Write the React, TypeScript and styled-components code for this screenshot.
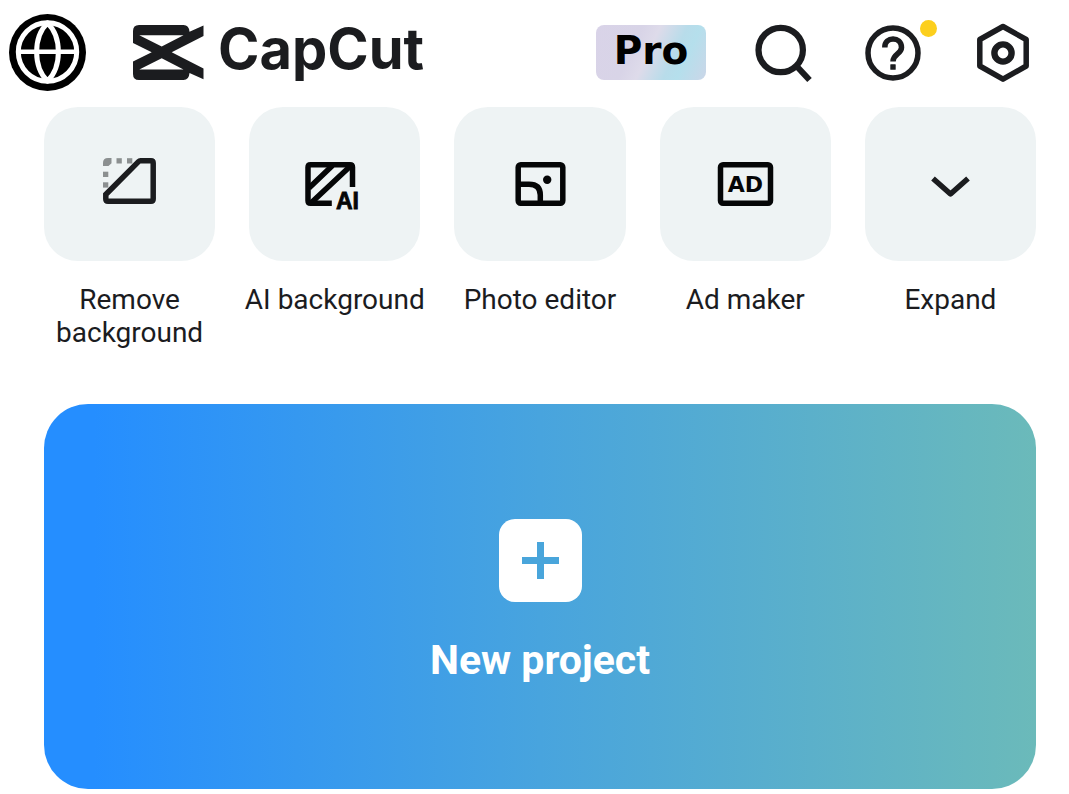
import React from "react";
import styled, { createGlobalStyle } from "styled-components";

const GlobalStyle = createGlobalStyle`
  *, *::before, *::after { box-sizing: border-box; }
  body {
    margin: 0;
    background: #ffffff;
    color: #1b1c1f;
    font-family: Roboto, "Liberation Sans", sans-serif;
  }
  button { margin: 0; padding: 0; border: 0; background: none; color: inherit; font: inherit; cursor: pointer; }
  svg { display: block; }
`;

const Page = styled.div`
  padding-bottom: 5px;
`;

const Header = styled.header`
  display: flex;
  align-items: center;
  justify-content: space-between;
  padding: 14px 33px 16px 9px;
`;

const Brand = styled.div`
  display: flex;
  align-items: center;
  gap: 47px;
`;

const IconButton = styled.button`
  position: relative;
  flex: none;
`;

const Logo = styled.a`
  display: flex;
  align-items: center;
  gap: 14px;
  height: 77px;
  color: #1b1c1f;
  text-decoration: none;
`;

const Wordmark = styled.span`
  font-family: Inter, "Liberation Sans", sans-serif;
  font-size: 56px;
  font-weight: 700;
  line-height: 68px;
  padding-bottom: 8px;
`;

const Actions = styled.nav`
  display: flex;
  align-items: center;
  gap: 44px;
`;

const ProButton = styled.button`
  width: 110px;
  height: 55px;
  padding-bottom: 4px;
  border-radius: 8px;
  background: linear-gradient(115deg, #d9d3e8 0%, #d8d4e7 35%, #dedbea 48%, #b8dcea 68%, #b5dfec 78%, #cbd6e8 100%);
  color: #000000;
  font-family: "DejaVu Sans", sans-serif;
  font-size: 39px;
  font-weight: 700;
  line-height: 51px;
  text-align: center;
`;

const Badge = styled.span`
  position: absolute;
  top: 0;
  right: -11px;
  width: 17px;
  height: 17px;
  border-radius: 50%;
  background: #fccf1d;
`;

const Tools = styled.section`
  display: grid;
  grid-template-columns: repeat(5, minmax(0, 1fr));
  gap: 34px;
  padding: 0 33px 0 44px;
`;

const Tool = styled.button`
  display: flex;
  flex-direction: column;
  align-items: stretch;
  gap: 22px;
`;

const Tile = styled.span`
  display: flex;
  align-items: center;
  justify-content: center;
  height: 154px;
  border-radius: 34px;
  background: #eef3f4;
  color: #050607;
`;

const ToolLabel = styled.span`
  margin: 0 -8px;
  font-size: 28px;
  line-height: 33px;
  text-align: center;
`;

const Main = styled.main`
  padding: 55px 33px 0 44px;
`;

const NewProject = styled.button`
  display: flex;
  flex-direction: column;
  align-items: center;
  gap: 30px;
  width: 100%;
  padding: 115px 24px 101px;
  border-radius: 44px;
  background: linear-gradient(90deg, #258eff 0%, #258eff 5%, #48a4de 50%, #6bbaba 100%);
  color: #ffffff;
  font-size: 41px;
  font-weight: 700;
  line-height: 56px;
`;

const PlusBox = styled.span`
  display: flex;
  align-items: center;
  justify-content: center;
  width: 83px;
  height: 83px;
  border-radius: 16px;
  background: #ffffff;
  color: #49a5db;
`;

const GlobeIcon = () => (
  <svg width="77" height="77" viewBox="0 0 77 77" fill="none" stroke="#fff" strokeWidth="5" aria-hidden="true">
    <circle cx="38.5" cy="38.5" r="38.5" fill="#000" stroke="none" />
    <circle cx="38.5" cy="38" r="29.2" />
    <path d="M38.5 9C24 23 24 53 38.5 67C53 53 53 23 38.5 9Z" strokeLinejoin="round" />
    <path d="M8 37.8H69" strokeWidth="4.5" />
  </svg>
);

const LogoMark = () => (
  <svg width="71" height="55" viewBox="0 0 71 55" fill="currentColor" aria-hidden="true">
    <path
      fillRule="evenodd"
      d="M6 0H50.500Q56 0 56.500 6.800L70.500 .5V11L38.700 27.300L70.500 43.500V54.300L56.500 48Q56 55 50.500 55H6Q0 55 0 49V36.500L18.700 27.300L0 18V6Q0 0 6 0ZM6.300 10.300L28.700 21.500L50.500 10.300ZM6.300 44.500H50.500L28.700 33.300Z"
    />
  </svg>
);

const SearchIcon = () => (
  <svg width="66" height="66" viewBox="0 0 66 66" fill="none" stroke="currentColor" strokeWidth="6.2" aria-hidden="true">
    <circle cx="30.700" cy="30" r="22.200" />
    <path d="M46 45.500L59.500 60" />
  </svg>
);

const HelpIcon = () => (
  <svg width="66" height="66" viewBox="0 0 66 66" fill="none" stroke="currentColor" strokeWidth="5.500" aria-hidden="true">
    <circle cx="33" cy="33" r="25" />
    <path d="M24.800 27.500C24.500 16 41.500 16 41.500 27.500C41.500 34 33 34 33 41.500" />
    <rect x="30.300" y="44.300" width="5.400" height="5.400" rx=".5" fill="currentColor" stroke="none" />
  </svg>
);

const SettingsIcon = () => (
  <svg width="66" height="66" viewBox="0 0 66 66" fill="none" stroke="currentColor" strokeWidth="5.500" strokeLinejoin="round" aria-hidden="true">
    <path d="M33 6.500L56.200 19.500V46L33 59.200L9.800 46V19.500Z" />
    <circle cx="33" cy="33" r="8.600" strokeWidth="6.400" />
  </svg>
);

const ToolSvg = ({ children }: { children: React.ReactNode }) => (
  <svg width="64" height="64" viewBox="0 0 64 64" fill="none" stroke="currentColor" strokeWidth="5.500" aria-hidden="true">
    {children}
  </svg>
);

const RemoveBackgroundIcon = () => (
  <ToolSvg>
    <g fill="#8b8f90" stroke="none">
      <path d="M5 14V11Q5 6 10 6H13.500V11.300L10.500 14Z" />
      <rect x="18.500" y="6.200" width="5.300" height="5.300" />
      <rect x="29" y="6.200" width="5.300" height="5.300" />
      <rect x="5" y="19.700" width="5.300" height="5.300" />
      <rect x="5" y="30.300" width="5.300" height="5.300" />
    </g>
    <path d="M42.500 8.800H53Q55.200 8.800 55.200 11V47Q55.200 49.200 53 49.200H10Q7.800 49.200 7.800 47V42.500L40.500 9.600Q41.300 8.800 42.500 8.800Z" stroke="#1b1c1f" />
  </ToolSvg>
);

const AiBackgroundIcon = () => (
  <ToolSvg>
    <path d="M28.800 51.200H7.500Q5 51.200 5 48.700V15.300Q5 12.800 7.500 12.800H47Q49.500 12.800 49.500 15.300V35" />
    <path d="M6 36L29.500 13.500M8.500 50.500L47.500 14" />
    <text x="33" y="56.500" fill="currentColor" stroke="currentColor" strokeWidth=".8" fontFamily="Liberation Sans" fontWeight="700" fontSize="23">AI</text>
  </ToolSvg>
);

const PhotoEditorIcon = () => (
  <ToolSvg>
    <rect x="10.200" y="12.800" width="44.600" height="38.500" rx="2.500" />
    <path d="M10 32.300H21Q32.300 32.300 32.300 43V51" />
    <circle cx="39.200" cy="27.800" r="4.200" fill="currentColor" stroke="none" />
  </ToolSvg>
);

const AdMakerIcon = () => (
  <ToolSvg>
    <rect x="7.500" y="12.800" width="50" height="38.500" rx="2.500" />
    <text x="32.500" y="40.300" textAnchor="middle" fill="currentColor" stroke="none" fontFamily="DejaVu Sans" fontWeight="700" fontSize="22">AD</text>
  </ToolSvg>
);

const ExpandIcon = () => (
  <ToolSvg>
    <path d="M15 26.500L32.500 42L50 26.500" stroke="#1b1c1f" strokeLinejoin="round" />
  </ToolSvg>
);

const PlusIcon = () => (
  <svg width="37" height="37" viewBox="0 0 37 37" stroke="currentColor" strokeWidth="7" aria-hidden="true">
    <path d="M0 18.500H37M18.500 0V37" />
  </svg>
);

const tools = [
  { label: "Remove background", Icon: RemoveBackgroundIcon },
  { label: "AI background", Icon: AiBackgroundIcon },
  { label: "Photo editor", Icon: PhotoEditorIcon },
  { label: "Ad maker", Icon: AdMakerIcon },
  { label: "Expand", Icon: ExpandIcon },
];

export default function App() {
  return (
    <Page>
      <GlobalStyle />
      <Header>
        <Brand>
          <IconButton aria-label="Language"><GlobeIcon /></IconButton>
          <Logo href="#">
            <LogoMark />
            <Wordmark>CapCut</Wordmark>
          </Logo>
        </Brand>
        <Actions>
          <ProButton>Pro</ProButton>
          <IconButton aria-label="Search"><SearchIcon /></IconButton>
          <IconButton aria-label="Help">
            <HelpIcon />
            <Badge />
          </IconButton>
          <IconButton aria-label="Settings"><SettingsIcon /></IconButton>
        </Actions>
      </Header>
      <Tools>
        {tools.map(({ label, Icon }) => (
          <Tool key={label}>
            <Tile><Icon /></Tile>
            <ToolLabel>{label}</ToolLabel>
          </Tool>
        ))}
      </Tools>
      <Main>
        <NewProject>
          <PlusBox><PlusIcon /></PlusBox>
          <span>New project</span>
        </NewProject>
      </Main>
    </Page>
  );
}
